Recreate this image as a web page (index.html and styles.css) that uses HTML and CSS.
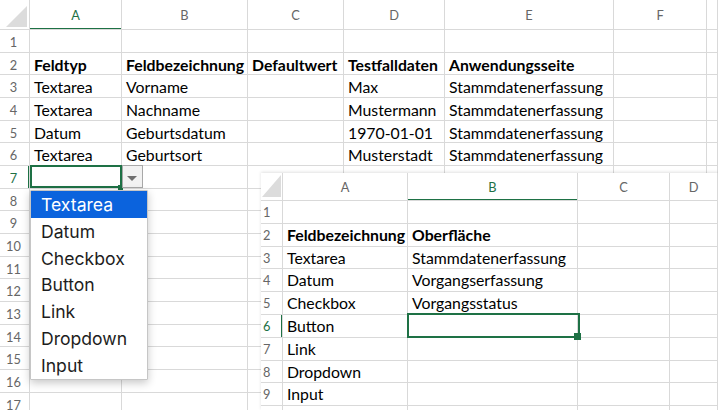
FILE: index.html
```html
<!DOCTYPE html>
<html lang="de">
<head>
<meta charset="utf-8">
<title>Excel</title>
<link rel="stylesheet" href="styles.css">
</head>
<body>
<div class="sheet s1">
  <div class="c h corner"></div><div class="c h colsel">A</div><div class="c h">B</div><div class="c h">C</div><div class="c h">D</div><div class="c h">E</div><div class="c h">F</div><div class="c h"></div>

  <div class="c n">1</div><div class="c"></div><div class="c"></div><div class="c"></div><div class="c"></div><div class="c"></div><div class="c"></div><div class="c"></div>
  <div class="c n">2</div><div class="c b">Feldtyp</div><div class="c b">Feldbezeichnung</div><div class="c b">Defaultwert</div><div class="c b">Testfalldaten</div><div class="c b">Anwendungsseite</div><div class="c"></div><div class="c"></div>
  <div class="c n">3</div><div class="c">Textarea</div><div class="c">Vorname</div><div class="c"></div><div class="c">Max</div><div class="c">Stammdatenerfassung</div><div class="c"></div><div class="c"></div>
  <div class="c n">4</div><div class="c">Textarea</div><div class="c">Nachname</div><div class="c"></div><div class="c">Mustermann</div><div class="c">Stammdatenerfassung</div><div class="c"></div><div class="c"></div>
  <div class="c n">5</div><div class="c">Datum</div><div class="c">Geburtsdatum</div><div class="c"></div><div class="c">1970-01-01</div><div class="c">Stammdatenerfassung</div><div class="c"></div><div class="c"></div>
  <div class="c n">6</div><div class="c">Textarea</div><div class="c">Geburtsort</div><div class="c"></div><div class="c">Musterstadt</div><div class="c">Stammdatenerfassung</div><div class="c"></div><div class="c"></div>
  <div class="c n rowsel">7</div>
  <div class="c act act1">
    <span class="selbox"></span>
    <span class="handle"></span>
    <span class="ddbtn"><span class="tri"></span></span>
    <ul class="ddlist">
      <li class="on">Textarea</li>
      <li>Datum</li>
      <li>Checkbox</li>
      <li>Button</li>
      <li>Link</li>
      <li>Dropdown</li>
      <li>Input</li>
    </ul>
  </div><div class="c"></div><div class="c"></div><div class="c"></div><div class="c"></div><div class="c"></div><div class="c"></div>
  <div class="c n">8</div><div class="c"></div><div class="c"></div><div class="c"></div><div class="c"></div><div class="c"></div><div class="c"></div><div class="c"></div>
  <div class="c n">9</div><div class="c"></div><div class="c"></div><div class="c"></div><div class="c"></div><div class="c"></div><div class="c"></div><div class="c"></div>
  <div class="c n">10</div><div class="c"></div><div class="c"></div><div class="c"></div><div class="c"></div><div class="c"></div><div class="c"></div><div class="c"></div>
  <div class="c n">11</div><div class="c"></div><div class="c"></div><div class="c"></div><div class="c"></div><div class="c"></div><div class="c"></div><div class="c"></div>
  <div class="c n">12</div><div class="c"></div><div class="c"></div><div class="c"></div><div class="c"></div><div class="c"></div><div class="c"></div><div class="c"></div>
  <div class="c n">13</div><div class="c"></div><div class="c"></div><div class="c"></div><div class="c"></div><div class="c"></div><div class="c"></div><div class="c"></div>
  <div class="c n">14</div><div class="c"></div><div class="c"></div><div class="c"></div><div class="c"></div><div class="c"></div><div class="c"></div><div class="c"></div>
  <div class="c n">15</div><div class="c"></div><div class="c"></div><div class="c"></div><div class="c"></div><div class="c"></div><div class="c"></div><div class="c"></div>
  <div class="c n">16</div><div class="c"></div><div class="c"></div><div class="c"></div><div class="c"></div><div class="c"></div><div class="c"></div><div class="c"></div>
  <div class="c n">17</div><div class="c"></div><div class="c"></div><div class="c"></div><div class="c"></div><div class="c"></div><div class="c"></div><div class="c"></div>
</div>

<div class="sheet s2">
  <div class="c h corner"></div><div class="c h">A</div><div class="c h colsel">B</div><div class="c h">C</div><div class="c h">D</div>
  <div class="c n">1</div><div class="c"></div><div class="c"></div><div class="c"></div><div class="c"></div>
  <div class="c n">2</div><div class="c b">Feldbezeichnung</div><div class="c b">Oberfläche</div><div class="c"></div><div class="c"></div>
  <div class="c n">3</div><div class="c">Textarea</div><div class="c">Stammdatenerfassung</div><div class="c"></div><div class="c"></div>
  <div class="c n">4</div><div class="c">Datum</div><div class="c">Vorgangserfassung</div><div class="c"></div><div class="c"></div>
  <div class="c n">5</div><div class="c">Checkbox</div><div class="c">Vorgangsstatus</div><div class="c"></div><div class="c"></div>
  <div class="c n rowsel">6</div><div class="c">Button</div><div class="c act act2"><span class="selbox"></span><span class="handle"></span></div><div class="c"></div><div class="c"></div>
  <div class="c n">7</div><div class="c">Link</div><div class="c"></div><div class="c"></div><div class="c"></div>
  <div class="c n">8</div><div class="c">Dropdown</div><div class="c"></div><div class="c"></div><div class="c"></div>
  <div class="c n">9</div><div class="c">Input</div><div class="c"></div><div class="c"></div><div class="c"></div>
  <div class="c n"></div><div class="c"></div><div class="c"></div><div class="c"></div><div class="c"></div>
</div>
</body>
</html>
```

FILE: styles.css
```css
* {
  box-sizing: border-box;
  margin: 0;
  padding: 0;
}

html, body {
  width: 718px;
  height: 410px;
  overflow: hidden;
}

body {
  position: relative;
  background: #fff;
  font-family: Lato, "Open Sans", sans-serif;
  color: #000;
}

.sheet {
  display: grid;
  background: #fff;
}

.s1 {
  grid-template-columns: 30px 92px 126px 96px 101px 169px 93px 1fr;
  grid-template-rows: 30px;
  grid-auto-rows: 22.67px;
}

.s2 {
  position: absolute;
  left: 261px;
  top: 173px;
  width: 457px;
  height: 237px;
  overflow: hidden;
  z-index: 5;
  grid-template-columns: 22px 125px 170px 92px 1fr;
  grid-template-rows: 28px;
  grid-auto-rows: 22.8px;
  box-shadow: 0 -1px 3px rgba(0, 0, 0, 0.12);
}

.c {
  position: relative;
  border-right: 1px solid #d9d9d9;
  border-bottom: 1px solid #d9d9d9;
  font-size: 15.8px;
  line-height: 22px;
  padding: 1px 0 0 4px;
  white-space: nowrap;
  overflow: hidden;
}

.s2 .c {
  line-height: 22.8px;
  padding-top: 0;
}

.b {
  font-weight: 700;
}

.h {
  font-size: 12.8px;
  color: #666;
  text-align: center;
  line-height: 29px;
  padding: 1px 0 0 0;
}

.s2 .h {
  line-height: 28px;
}

.n {
  font-size: 12.8px;
  color: #666;
  text-align: center;
  padding: 1px 2px 0 0;
}

.s2 .n {
  text-align: left;
  padding: 0 0 0 2px;
}

.corner::after {
  content: "";
  position: absolute;
  right: 2px;
  bottom: 2px;
  width: 21px;
  height: 21px;
  background: #dcdcdc;
  clip-path: polygon(100% 0, 100% 100%, 0 100%);
}

.s2 .corner::after {
  right: 1px;
  bottom: 3px;
  width: 19px;
  height: 22px;
}

.colsel {
  color: #1e7145;
}

.colsel::after {
  content: "";
  position: absolute;
  left: 0;
  right: -1px;
  bottom: -1px;
  height: 2px;
  background: #1e7145;
}

.rowsel {
  color: #1e7145;
}

.rowsel::after {
  content: "";
  position: absolute;
  top: 0;
  bottom: -1px;
  right: -1px;
  width: 2px;
  background: #1e7145;
}

.act {
  overflow: visible;
  z-index: 3;
}

.selbox {
  position: absolute;
  left: 0;
  top: -1px;
  right: -1px;
  bottom: 0;
  border: 2px solid #1e7145;
}

.act2 .selbox {
  left: -1px;
  top: -2px;
  right: -3px;
  bottom: -1px;
}

.handle {
  position: absolute;
  right: -2px;
  bottom: -2px;
  width: 5px;
  height: 5px;
  background: #1e7145;
}

.act2 .handle {
  right: -4px;
  bottom: -3px;
  width: 7px;
  height: 7px;
}

.ddbtn {
  position: absolute;
  left: calc(100% + 1px);
  top: -1px;
  width: 21px;
  height: 23px;
  border: 1px solid #a8a8a8;
  background: #f2f2f2;
}

.tri {
  position: absolute;
  left: 4px;
  top: 10px;
  width: 0;
  height: 0;
  border-left: 5px solid transparent;
  border-right: 5px solid transparent;
  border-top: 5px solid #6f6f6f;
}

.ddlist {
  position: absolute;
  left: 0;
  top: 24px;
  width: 118px;
  list-style: none;
  background: #fff;
  border: 1px solid #c6c6c6;
  border-radius: 1px;
  box-shadow: 0 3px 8px rgba(0, 0, 0, 0.22);
  z-index: 4;
}

.ddlist li {
  height: 26.8px;
  line-height: 25.8px;
  padding: 1px 0 0 10px;
  font-family: Inter, "Noto Sans", sans-serif;
  font-size: 17.6px;
  color: #1d1d1d;
}

.ddlist li.on {
  background: #0b63dd;
  color: #fff;
}
```
